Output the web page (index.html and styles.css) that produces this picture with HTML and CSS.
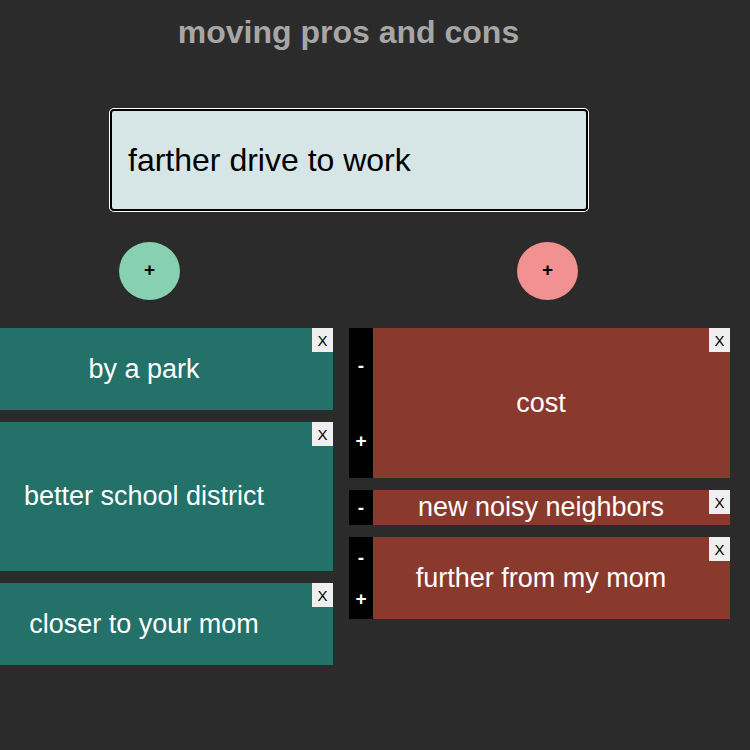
FILE: index.html
```html
<!DOCTYPE html>
<html lang="en">
<head>
    <meta charset="UTF-8">
    <meta name="viewport" content="width=device-width, initial-scale=1.0">
    <title>moving pros and cons</title>
    <link rel="stylesheet" href="styles.css">
</head>
<body>
    <div class="app">
        <h1 class="title">moving pros and cons</h1>

        <input class="entry" type="text" value="farther drive to work">

        <div class="add-row">
            <button class="add add-pro">+</button>
            <button class="add add-con">+</button>
        </div>

        <div class="lists">
            <!-- pros -->
            <div class="list">
                <div class="card pro" style="height: 82px">
                    <span class="card-text">by a park</span>
                    <button class="remove">X</button>
                </div>
                <div class="card pro" style="height: 149px">
                    <span class="card-text">better school district</span>
                    <button class="remove">X</button>
                </div>
                <div class="card pro" style="height: 82px">
                    <span class="card-text">closer to your mom</span>
                    <button class="remove">X</button>
                </div>
            </div>

            <!-- cons -->
            <div class="list list-cons">
                <div class="card con" style="height: 150px">
                    <div class="weight">
                        <span>-</span>
                        <span>+</span>
                    </div>
                    <span class="card-text">cost</span>
                    <button class="remove">X</button>
                </div>
                <div class="card con" style="height: 35px">
                    <div class="weight">
                        <span>-</span>
                    </div>
                    <span class="card-text">new noisy neighbors</span>
                    <button class="remove">X</button>
                </div>
                <div class="card con" style="height: 82px">
                    <div class="weight">
                        <span>-</span>
                        <span>+</span>
                    </div>
                    <span class="card-text">further from my mom</span>
                    <button class="remove">X</button>
                </div>
            </div>
        </div>
    </div>
</body>
</html>
```

FILE: styles.css
```css
body {
    margin: 0;
    background-color: #2b2b2b;
    font-family: "Liberation Sans", Arial, sans-serif;
    overflow: hidden;
}
.app {
    width: 730px;
}
.title {
    width: 697px;
    margin: 14px 0 0;
    text-align: center;
    font-size: 32px;
    line-height: 36px;
    font-weight: bold;
    color: #a6a6a6;
}
.entry {
    display: block;
    box-sizing: border-box;
    width: 478px;
    height: 102px;
    margin: 59px 0 0 110px;
    padding: 0 16px;
    background-color: #d6e6e6;
    border: 2px solid #000;
    border-radius: 4px;
    box-shadow: 0 0 0 1px #fff;
    font-family: inherit;
    font-size: 32px;
    color: #000;
    outline: none;
}
.add-row {
    display: flex;
    gap: 337px;
    margin: 31px 0 0 119px;
}
.add {
    width: 61px;
    height: 58px;
    border: none;
    border-radius: 50%;
    padding: 0 0 2px;
    font-family: inherit;
    font-size: 19px;
    font-weight: bold;
    color: #000;
}
.add-pro {
    background-color: #87d0b1;
}
.add-con {
    background-color: #f29191;
}
.lists {
    display: flex;
    gap: 16px;
    margin-top: 28px;
}
.list {
    display: flex;
    flex-direction: column;
    gap: 12px;
    width: 333px;
}
.list-cons {
    width: 381px;
}
.card {
    display: flex;
    align-items: center;
    box-sizing: border-box;
    color: #fff;
    font-size: 27px;
}
.pro {
    background-color: #237169;
}
.con {
    background-color: #8a3a2d;
}
.card-text {
    flex: 1;
    text-align: center;
    white-space: nowrap;
}
.pro .card-text {
    margin-left: -24px;
}
.remove {
    align-self: flex-start;
    width: 21px;
    height: 24px;
    padding: 0;
    border: none;
    background-color: #efefef;
    font-family: inherit;
    font-size: 15px;
    color: #000;
}
.weight {
    align-self: stretch;
    display: flex;
    flex-direction: column;
    justify-content: space-around;
    align-items: center;
    width: 24px;
    background-color: #000;
    font-size: 19px;
    font-weight: bold;
    line-height: 20px;
}
```
